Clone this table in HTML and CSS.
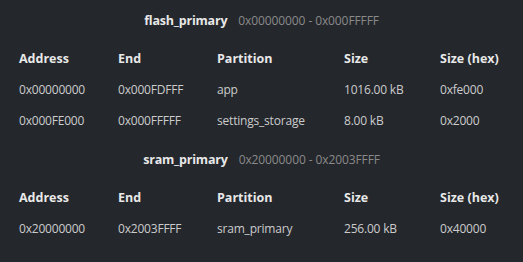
FILE: index.html
```html
<!DOCTYPE html>
<html>
<head>
<meta charset="utf-8">
<link rel="stylesheet" href="styles.css">
</head>
<body>
<section class="region">
  <div class="title"><span class="name">flash_primary</span><span class="range">0x00000000 - 0x000FFFFF</span></div>
  <div class="grid">
    <div class="row head"><span>Address</span><span>End</span><span>Partition</span><span>Size</span><span>Size (hex)</span></div>
    <div class="row"><span>0x00000000</span><span>0x000FDFFF</span><span>app</span><span>1016.00 kB</span><span>0xfe000</span></div>
    <div class="row"><span>0x000FE000</span><span>0x000FFFFF</span><span>settings_storage</span><span>8.00 kB</span><span>0x2000</span></div>
  </div>
</section>
<section class="region">
  <div class="title"><span class="name">sram_primary</span><span class="range">0x20000000 - 0x2003FFFF</span></div>
  <div class="grid">
    <div class="row head"><span>Address</span><span>End</span><span>Partition</span><span>Size</span><span>Size (hex)</span></div>
    <div class="row"><span>0x20000000</span><span>0x2003FFFF</span><span>sram_primary</span><span>256.00 kB</span><span>0x40000</span></div>
  </div>
</section>
</body>
</html>
```
FILE: styles.css
```css
html, body {
  margin: 0;
  padding: 0;
  background: #24272c;
}
body {
  padding: 11px 19px 0 19px;
  font-family: "Open Sans", "Noto Sans", sans-serif;
  font-size: 12.5px;
  color: #cccccc;
}
.region {
  margin-bottom: 14px;
}
.title {
  height: 20px;
  line-height: 20px;
  display: flex;
  justify-content: center;
  gap: 11px;
  margin-bottom: 12px;
}
.name {
  font-weight: 700;
  color: #e8e8e8;
  letter-spacing: -0.2px;
}
.range {
  color: #8a8a8a;
  font-size: 12px;
  letter-spacing: -0.1px;
}
.row {
  display: grid;
  grid-template-columns: 99px 99px 127px 96px auto;
  height: 31px;
  align-items: center;
  white-space: nowrap;
  font-size: 12px;
  letter-spacing: -0.2px;
}
.head {
  font-size: 12.5px;
  letter-spacing: 0;
  font-weight: 700;
  color: #e8e8e8;
}
```
